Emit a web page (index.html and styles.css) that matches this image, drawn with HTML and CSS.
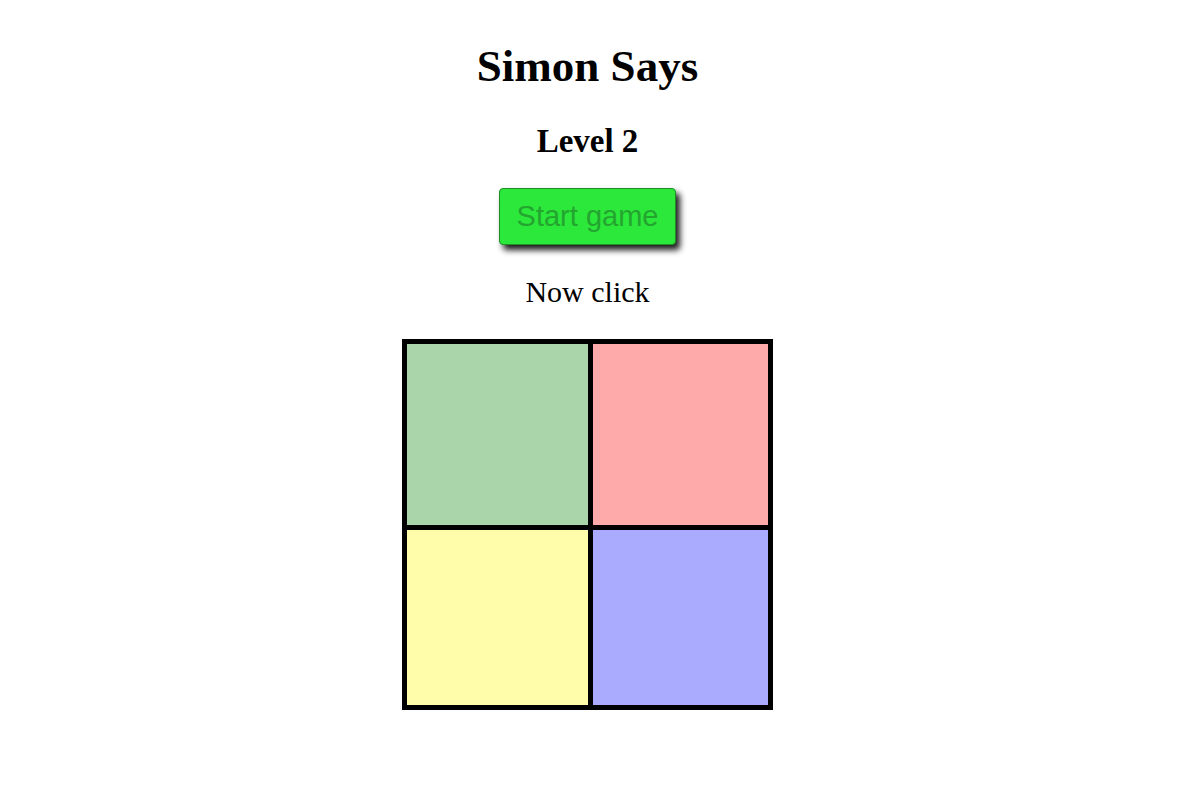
FILE: index.html
```html
<!DOCTYPE html>
<html lang="en">
<head>
<meta charset="utf-8">
<title>Simon Says</title>
<link rel="stylesheet" href="styles.css">
</head>
<body>
<main class="game">
  <h1 class="title">Simon Says</h1>
  <h2 class="level">Level 2</h2>
  <button class="start-btn" type="button">Start game</button>
  <p class="status">Now click</p>
  <div class="board">
    <div class="pad pad-green"></div>
    <div class="pad pad-red"></div>
    <div class="pad pad-yellow"></div>
    <div class="pad pad-blue"></div>
  </div>
</main>
</body>
</html>
```

FILE: styles.css
```css
html, body {
  margin: 0;
  padding: 0;
  background: #ffffff;
}

body {
  font-family: "Liberation Serif", "Times New Roman", serif;
  color: #000000;
}

.game {
  width: 1175px;
  padding-top: 41px;
  display: flex;
  flex-direction: column;
  align-items: center;
  text-align: center;
}

.title {
  margin: 0;
  font-size: 45px;
  line-height: 50px;
  font-weight: bold;
}

.level {
  margin: 31px 0 0;
  font-size: 33px;
  line-height: 38px;
  font-weight: bold;
}

.start-btn {
  margin-top: 28px;
  font-family: "Liberation Sans", Arial, sans-serif;
  font-size: 29px;
  line-height: 33px;
  padding: 11px 17px;
  color: #24a530;
  background: #2ce83a;
  border: 1px solid #1c8f25;
  border-radius: 4px;
  box-shadow: 4px 5px 6px rgba(0, 0, 0, 0.9);
  cursor: pointer;
}

.status {
  margin: 30px 0 0;
  font-size: 30px;
  line-height: 34px;
}

.board {
  margin-top: 30px;
  display: grid;
  grid-template-columns: 181px 175px;
  grid-template-rows: 181px 175px;
  gap: 5px;
  border: 5px solid #000000;
  background: #000000;
}

.pad-green { background: #aad4aa; }
.pad-red { background: #ffaaaa; }
.pad-yellow { background: #fffcaa; }
.pad-blue { background: #aaaaff; }
```
